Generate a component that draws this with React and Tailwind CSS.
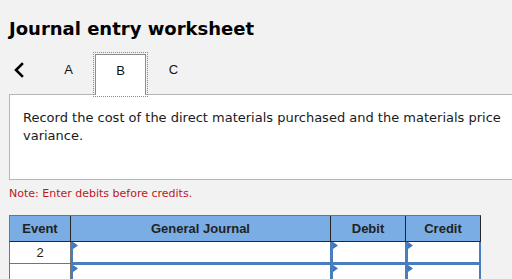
export default function App() {
  const tri = (
    <svg className="absolute left-0 top-0" width="5" height="7" viewBox="0 0 5 7">
      <polygon points="0,0 5,3.5 0,7" fill="#3f78c0" />
    </svg>
  );
  return (
    <div className="w-[512px] h-[279px] overflow-hidden bg-[#f2f2f2] font-['DejaVu_Sans',Verdana,sans-serif] text-black">
      <div className="h-[52px] pl-[9px] pt-[18px]">
        <h1 className="text-[18px] font-bold leading-[22px] whitespace-nowrap">Journal entry worksheet</h1>
      </div>
      <div className="flex h-[42px] pl-[9px] font-['Liberation_Sans',Arial,sans-serif] text-[13px] leading-[18px] text-[#111]">
        <div className="w-[35px] pl-[4px] pt-[10px]">
          <svg width="12" height="16" viewBox="0 0 12 16">
            <polyline points="9,2 3,8 9,14" fill="none" stroke="#000" strokeWidth="2.6" strokeLinecap="square" />
          </svg>
        </div>
        <div className="w-[49px] pt-[9px] text-center">A</div>
        <div className="relative z-10 w-[55px] h-[45px] border border-dotted border-[#5f93d4] p-px">
          <div className="h-full border border-b-0 border-[#8c8c8c] bg-white pt-[7px] text-center">B</div>
        </div>
        <div className="w-[51px] pt-[9px] text-center">C</div>
      </div>
      <div className="ml-[9px] w-[510px] h-[86px] border border-[#b5b5b5] bg-white pl-[13px] pt-[14px]">
        <p className="text-[13px] leading-[18px] text-[#1a1a1a] w-[485px]">
          Record the cost of the direct materials purchased and the materials price variance.
        </p>
      </div>
      <p className="pl-[9px] pt-[6px] text-[11px] leading-[16px] text-[#c0161c]">Note: Enter debits before credits.</p>
      <div className="ml-[9px] mt-[13px] w-[472px] font-['Liberation_Sans',Arial,sans-serif]">
        <div className="grid grid-cols-[61px_260px_75px_74px] h-[27px] bg-[#7aade3] border-t border-l border-t-[#747474] border-l-[#747474] border-r border-r-[#262626] border-b border-b-[#262626] text-[13px] font-bold text-[#222]">
          <div className="flex items-center justify-center border-r border-[#262626]">Event</div>
          <div className="flex items-center justify-center border-r border-[#262626]">General Journal</div>
          <div className="flex items-center justify-center border-r border-[#262626]">Debit</div>
          <div className="flex items-center justify-center">Credit</div>
        </div>
        <div className="grid grid-cols-[61px_260px_75px_75px] h-[22px] border-l border-[#747474]">
          <div className="flex items-center justify-center border-r border-b border-[#747474] bg-white text-[13px] text-[#222]">2</div>
          <div className="relative border-l-2 border-r border-b-2 border-[#4a7dbd] bg-white">{tri}</div>
          <div className="relative border-l-2 border-r border-b-2 border-[#4a7dbd] bg-white">{tri}</div>
          <div className="relative border-l-2 border-r-2 border-b-2 border-[#4a7dbd] bg-white">{tri}</div>
        </div>
        <div className="grid grid-cols-[61px_260px_75px_75px] h-[22px] border-l border-[#747474]">
          <div className="border-r border-b border-[#747474] bg-white"></div>
          <div className="relative border-l-2 border-r border-t border-b-2 border-[#4a7dbd] bg-white">{tri}</div>
          <div className="relative border-l-2 border-r border-t border-b-2 border-[#4a7dbd] bg-white">{tri}</div>
          <div className="relative border-l-2 border-r-2 border-t border-b-2 border-[#4a7dbd] bg-white">{tri}</div>
        </div>
      </div>
    </div>
  );
}
